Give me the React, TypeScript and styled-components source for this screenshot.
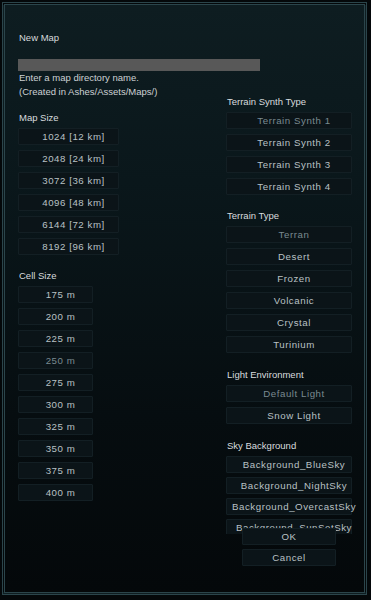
import React from "react";
import styled, { createGlobalStyle } from "styled-components";

const Global = createGlobalStyle`
  html, body { margin: 0; padding: 0; background: #04080a; }
  body { font-family: "Liberation Sans", Arial, sans-serif; }
  * { box-sizing: border-box; }
`;

const Frame = styled.div`
  margin: 2px 4px 0 2px;
  height: 593px;
  border: 3px double #2b454b;
  background: linear-gradient(180deg, #0e1d21 0%, #0a171b 30%, #060d10 70%, #04080a 100%);
  padding: 27px 0 0 13px;
  display: grid;
  grid-template-columns: 208px 126px;
  grid-template-rows: auto 1fr;
  overflow: hidden;
`;

const Header = styled.div`
  grid-column: 1 / -1;
  display: flex;
  flex-direction: column;
`;

const Title = styled.div`
  font-size: 9.5px;
  line-height: 12px;
  color: #d6dadc;
  padding-left: 1px;
`;

const NameInput = styled.div`
  margin-top: 15px;
  width: 242px;
  height: 12px;
  background: #585858;
`;

const Column = styled.div`
  display: flex;
  flex-direction: column;
  align-items: flex-start;
`;

const SideColumn = styled.div`
  display: flex;
  flex-direction: column;
  align-items: stretch;
`;

const ScrollArea = styled.div`
  height: 463px;
  overflow-x: visible;
  overflow-y: clip;
  padding-top: 25px;
  display: flex;
  flex-direction: column;
  align-items: stretch;
`;

const Hint = styled.div`
  font-size: 9.5px;
  line-height: 14px;
  color: #ccd1d4;
  padding-left: 1px;
`;

const Label = styled.div<{ $gap: number }>`
  margin-top: ${(p) => p.$gap}px;
  font-size: 9.5px;
  line-height: 12px;
  color: #d8dcdf;
  padding-left: 1px;
  white-space: nowrap;
`;

const List = styled.div<{ $gap: number }>`
  margin-top: 4px;
  display: flex;
  flex-direction: column;
  gap: ${(p) => p.$gap}px;
`;

const Btn = styled.div<{ $w: number; $dim?: boolean; $offset?: number }>`
  width: ${(p) => p.$w}px;
  height: 17px;
  display: flex;
  align-items: center;
  justify-content: center;
  padding-left: ${(p) => p.$offset ?? 10}px;
  background: #0b1418;
  border: 1px solid #131f24;
  border-radius: 1px;
  font-size: 9.7px;
  letter-spacing: 0.55px;
  color: ${(p) => (p.$dim ? "#7a8a90" : "#b9c1c5")};
  white-space: nowrap;
`;

const Footer = styled.div`
  margin-top: -6px;
  display: flex;
  flex-direction: column;
  align-items: center;
  gap: 4px;
`;

const mapSizes = ["1024 [12 km]", "2048 [24 km]", "3072 [36 km]", "4096 [48 km]", "6144 [72 km]", "8192 [96 km]"];
const cellSizes = ["175 m", "200 m", "225 m", "250 m", "275 m", "300 m", "325 m", "350 m", "375 m", "400 m"];
const synths = ["Terrain Synth 1", "Terrain Synth 2", "Terrain Synth 3", "Terrain Synth 4"];
const terrains = ["Terran", "Desert", "Frozen", "Volcanic", "Crystal", "Turinium"];
const lights = ["Default Light", "Snow Light"];
const skies = ["Background_BlueSky", "Background_NightSky", "Background_OvercastSky", "Background_SunSetSky"];

export default function App() {
  return (
    <>
      <Global />
      <Frame>
        <Header>
          <Title>New Map</Title>
          <NameInput />
        </Header>
        <Column>
          <Hint>Enter a map directory name.</Hint>
          <Hint>(Created in Ashes/Assets/Maps/)</Hint>
          <Label $gap={13}>Map Size</Label>
          <List $gap={5}>
            {mapSizes.map((s) => (
              <Btn key={s} $w={101}>{s}</Btn>
            ))}
          </List>
          <Label $gap={15}>Cell Size</Label>
          <List $gap={5}>
            {cellSizes.map((s) => (
              <Btn key={s} $w={75} $dim={s === "250 m"}>{s}</Btn>
            ))}
          </List>
        </Column>
        <SideColumn>
          <ScrollArea>
            <Label $gap={0}>Terrain Synth Type</Label>
            <List $gap={5}>
              {synths.map((s, i) => (
                <Btn key={s} $w={126} $dim={i === 0}>{s}</Btn>
              ))}
            </List>
            <Label $gap={15}>Terrain Type</Label>
            <List $gap={5}>
              {terrains.map((s, i) => (
                <Btn key={s} $w={126} $dim={i === 0}>{s}</Btn>
              ))}
            </List>
            <Label $gap={16}>Light Environment</Label>
            <List $gap={5}>
              {lights.map((s, i) => (
                <Btn key={s} $w={126} $dim={i === 0}>{s}</Btn>
              ))}
            </List>
            <Label $gap={16}>Sky Background</Label>
            <List $gap={4}>
              {skies.map((s) => (
                <Btn key={s} $w={126}>{s}</Btn>
              ))}
            </List>
          </ScrollArea>
          <Footer>
            <Btn $w={94} $offset={0}>OK</Btn>
            <Btn $w={94} $offset={0}>Cancel</Btn>
          </Footer>
        </SideColumn>
      </Frame>
    </>
  );
}
